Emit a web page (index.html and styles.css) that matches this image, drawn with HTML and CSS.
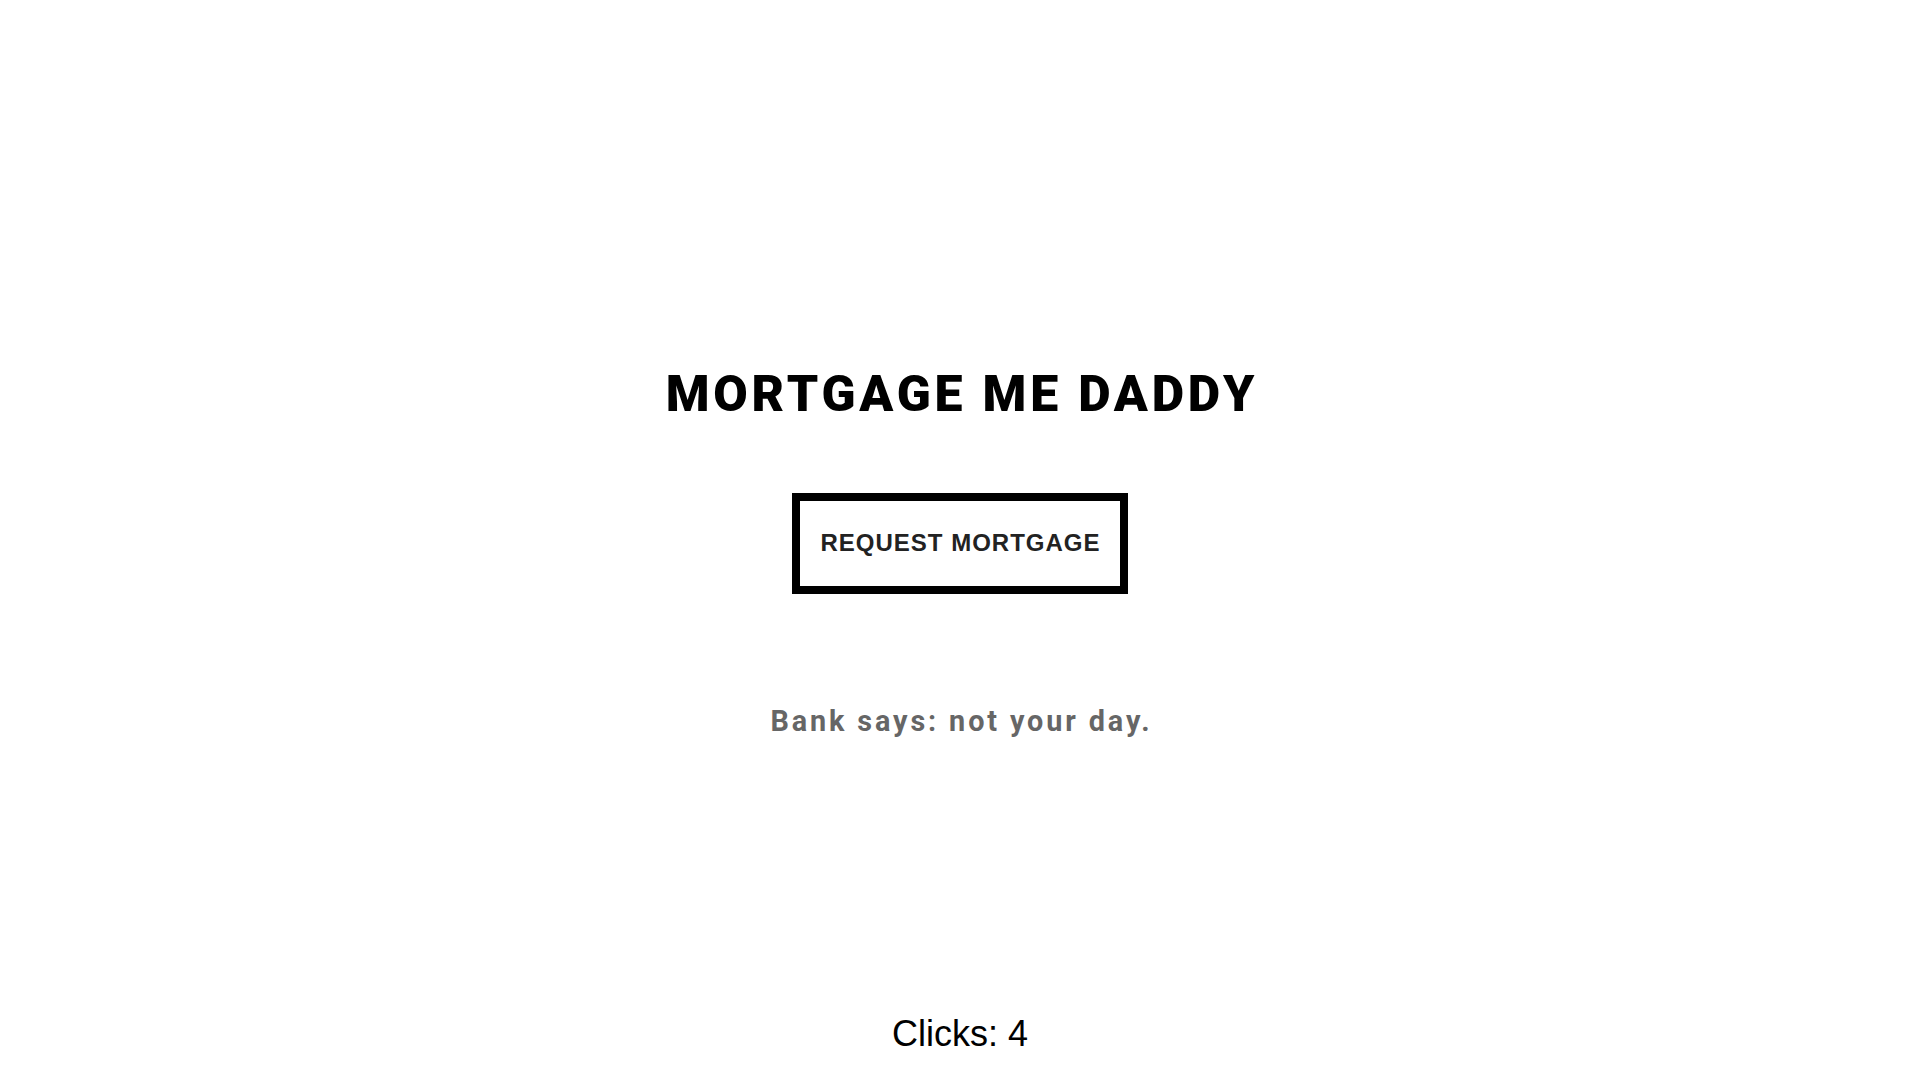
FILE: index.html
```html
<!DOCTYPE html>
<html lang="en">
<head>
<meta charset="utf-8">
<title>Mortgage Me Daddy</title>
<link rel="stylesheet" href="styles.css">
</head>
<body>
<div class="page">
  <main class="stage">
    <h1 class="title">MORTGAGE ME DADDY</h1>
    <button class="request-btn" type="button">REQUEST MORTGAGE</button>
    <p class="verdict">Bank says: not your day.</p>
  </main>
  <footer class="counter">Clicks: 4</footer>
</div>
</body>
</html>
```

FILE: styles.css
```css
html, body {
  margin: 0;
  padding: 0;
  background: #ffffff;
}

.page {
  min-height: 100vh;
  display: flex;
  flex-direction: column;
  align-items: center;
}

.stage {
  flex: 1;
  display: flex;
  flex-direction: column;
  align-items: center;
  padding-top: 365px;
}

.title {
  margin: 0;
  font-family: Roboto, "Liberation Sans", sans-serif;
  font-weight: 900;
  font-size: 50px;
  line-height: normal;
  letter-spacing: 3.8px;
  color: #000000;
  padding-left: 3.8px;
}

.request-btn {
  margin-top: 70px;
  padding: 28px 19px 29px 20px;
  border: 8px solid #000000;
  border-radius: 0;
  background: #ffffff;
  font-family: "Liberation Sans", Arial, sans-serif;
  font-weight: 700;
  font-size: 24px;
  line-height: normal;
  letter-spacing: 1px;
  color: #222222;
  cursor: pointer;
}

.verdict {
  margin: 110px 0 0;
  font-family: Roboto, "Liberation Sans", sans-serif;
  font-weight: 700;
  font-size: 28.8px;
  line-height: normal;
  letter-spacing: 0.1em;
  color: #666666;
  padding-left: 0.1em;
}

.counter {
  padding-bottom: 25px;
  font-family: "Liberation Sans", Arial, sans-serif;
  font-size: 36px;
  line-height: normal;
  color: #000000;
}
```
